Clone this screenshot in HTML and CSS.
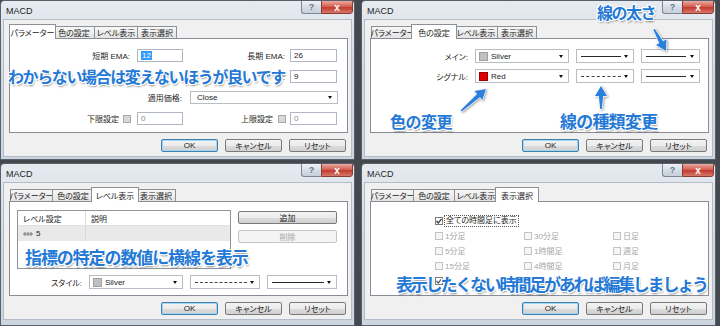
FILE: index.html
```html
<!DOCTYPE html>
<html lang="ja">
<head>
<meta charset="utf-8">
<title>MACD</title>
<link rel="stylesheet" href="styles.css">
</head>
<body>
<div class="screen">

  <section class="win">
    <div class="titlebar"><span class="title">MACD</span><div class="caps"><span class="cap help">?</span><span class="cap close">x</span></div></div>
    <div class="client">
      <div class="tabs">
        <span class="tab t1 active first">パラメーター</span><span class="tab t2">色の設定</span><span class="tab t3">レベル表示</span><span class="tab t4">表示選択</span>
      </div>
      <div class="panel params">
        <div class="prow">
          <span class="lab l127">短期 EMA:</span><span class="field w46"><span class="hl">12</span></span>
          <span class="lab l107">長期 EMA:</span><span class="field w47">26</span>
        </div>
        <div class="prow">
          <span class="lab l280 hidden-lab">ナ:</span><span class="field w47">9</span>
        </div>
        <div class="prow">
          <span class="lab l180">適用価格:</span><span class="select w148"><span class="stext">Close</span><i class="arr"></i></span>
        </div>
        <div class="prow">
          <span class="lab l113">下限設定</span><i class="cb gray"></i><span class="field w46 ml6 dim">0</span>
          <span class="lab l95">上限設定</span><i class="cb gray"></i><span class="field w47 ml4 dim">0</span>
        </div>
      </div>
      <div class="btnrow"><span class="btn default">OK</span><span class="btn">キャンセル</span><span class="btn">リセット</span></div>
    </div>
    <p class="note n1">わからない場合は変えないほうが良いです</p>
  </section>

  <section class="win">
    <div class="titlebar"><span class="title">MACD</span><div class="caps"><span class="cap help">?</span><span class="cap close">x</span></div></div>
    <div class="client">
      <div class="tabs">
        <span class="tab t1">パラメーター</span><span class="tab t2 active">色の設定</span><span class="tab t3">レベル表示</span><span class="tab t4">表示選択</span>
      </div>
      <div class="panel colors">
        <div class="crow">
          <span class="lab l104">メイン:</span>
          <span class="select w94"><i class="sw silver"></i><span class="stext">Silver</span><i class="arr"></i></span>
          <span class="select w58 ml7"><i class="ln solid"></i><i class="arr"></i></span>
          <span class="select w59 ml7"><i class="ln solid"></i><i class="arr"></i></span>
        </div>
        <div class="crow">
          <span class="lab l104">シグナル:</span>
          <span class="select w94"><i class="sw red"></i><span class="stext">Red</span><i class="arr"></i></span>
          <span class="select w58 ml7"><i class="ln dashed"></i><i class="arr"></i></span>
          <span class="select w59 ml7"><i class="ln solid"></i><i class="arr"></i></span>
        </div>
      </div>
      <div class="btnrow"><span class="btn default">OK</span><span class="btn">キャンセル</span><span class="btn">リセット</span></div>
    </div>
    <svg class="arrows" width="355" height="160" viewBox="0 0 355 160">
      <g transform="translate(124 88) rotate(48.7)"><polygon points="0,0 6,10 2.2,10 0.8,33 -0.8,33 -2.2,10 -6,10"/></g>
      <g transform="translate(239 85)"><polygon points="0,0 6,10 2.2,10 0.8,23 -0.8,23 -2.2,10 -6,10"/></g>
      <g transform="translate(304 50) rotate(151.4)"><polygon points="0,0 6,10 2.2,10 0.8,25 -0.8,25 -2.2,10 -6,10"/></g>
    </svg>
    <p class="note n2a">色の変更</p>
    <p class="note n2b">線の種類変更</p>
    <p class="note n2c">線の太さ</p>
  </section>

  <section class="win">
    <div class="titlebar"><span class="title">MACD</span><div class="caps"><span class="cap help">?</span><span class="cap close">x</span></div></div>
    <div class="client">
      <div class="tabs">
        <span class="tab t1">パラメーター</span><span class="tab t2">色の設定</span><span class="tab t3 active">レベル表示</span><span class="tab t4">表示選択</span>
      </div>
      <div class="panel levels">
        <div class="lvtop">
          <div class="list">
            <div class="lhead"><span class="c1">レベル設定</span><span class="c2">説明</span></div>
            <div class="lrow"><span class="c1"><svg class="licon" width="10" height="6" viewBox="0 0 10 6"><path d="M0 3H10M2 1V5M5 1V5M8 1V5" stroke="#777" stroke-width="1" fill="none"/></svg>5</span><span class="c2"></span></div>
          </div>
          <div class="lbtns"><span class="btn wide">追加</span><span class="btn wide off">削除</span></div>
        </div>
        <div class="crow srow">
          <span class="lab l72">スタイル:</span>
          <span class="select w94"><i class="sw silver"></i><span class="stext">Silver</span><i class="arr"></i></span>
          <span class="select w70 ml7"><i class="ln dashed long"></i><i class="arr"></i></span>
          <span class="select w70 ml7"><i class="ln solid long"></i><i class="arr"></i></span>
        </div>
      </div>
      <div class="btnrow"><span class="btn default">OK</span><span class="btn">キャンセル</span><span class="btn">リセット</span></div>
    </div>
    <p class="note n3">指標の特定の数値に横線を表示</p>
  </section>

  <section class="win">
    <div class="titlebar"><span class="title">MACD</span><div class="caps"><span class="cap help">?</span><span class="cap close">x</span></div></div>
    <div class="client">
      <div class="tabs">
        <span class="tab t1">パラメーター</span><span class="tab t2">色の設定</span><span class="tab t3">レベル表示</span><span class="tab t4 active">表示選択</span>
      </div>
      <div class="panel disp">
        <div class="allrow"><i class="cb on"><svg width="6" height="6" viewBox="0 0 6 6"><path d="M0.5 3L2.3 5L5.5 0.8" stroke="#333" stroke-width="1.2" fill="none"/></svg></i><span class="focus">全ての時間足に表示</span></div>
        <div class="tfgrid">
          <span class="opt"><i class="cb off"></i>1分足</span>
          <span class="opt"><i class="cb off"></i>30分足</span>
          <span class="opt"><i class="cb off"></i>日足</span>
          <span class="opt"><i class="cb off"></i>5分足</span>
          <span class="opt"><i class="cb off"></i>1時間足</span>
          <span class="opt"><i class="cb off"></i>週足</span>
          <span class="opt"><i class="cb off"></i>15分足</span>
          <span class="opt"><i class="cb off"></i>4時間足</span>
          <span class="opt"><i class="cb off"></i>月足</span>
          <span class="opt"><i class="cb on"><svg width="6" height="6" viewBox="0 0 6 6"><path d="M0.5 3L2.3 5L5.5 0.8" stroke="#555" stroke-width="1.2" fill="none"/></svg></i></span>
        </div>
      </div>
      <div class="btnrow"><span class="btn default">OK</span><span class="btn">キャンセル</span><span class="btn">リセット</span></div>
    </div>
    <p class="note n4">表示したくない時間足があれば編集しましょう</p>
  </section>

</div>
</body>
</html>
```
FILE: styles.css
```css
* { box-sizing: border-box; }
html, body { margin: 0; padding: 0; }
body {
  width: 720px; height: 326px; overflow: hidden;
  background: #44494f;
  font-family: "Liberation Sans", "Noto Sans CJK JP", sans-serif;
  font-size: 8px; color: #1c1c1c;
  font-feature-settings: "palt";
}
.screen {
  display: grid;
  grid-template-columns: 355px 355px;
  grid-template-rows: 160px 163px;
  column-gap: 6px; row-gap: 3px;
}
.win {
  position: relative;
  display: flex; flex-direction: column;
  border: 1px solid #56616d;
  border-radius: 4px 4px 0 0;
  background: linear-gradient(#e6ebf0, #d3dbe3 40%, #cdd6df);
  padding: 0 3px 3px 3px;
  overflow: hidden;
}
.titlebar { height: 19px; flex: none; display: flex; justify-content: space-between; align-items: flex-start; }
.title { font-family: "Liberation Sans", sans-serif; font-size: 9px; color: #1e1e1e; padding: 5px 0 0 2px; }
.caps { display: flex; margin-top: -1px; margin-right: -2px; }
.cap { height: 14px; display: flex; align-items: center; justify-content: center; font-family: "Liberation Sans", sans-serif; font-weight: bold; }
.help {
  width: 20px; border: 1px solid #7b8794; border-right: none; border-radius: 0 0 0 3px;
  background: linear-gradient(#f0f3f7, #d5dde6 50%, #c6d0db);
  color: #6a7786; font-size: 9px;
}
.close {
  width: 32px; border: 1px solid #8b3b33; border-radius: 0 0 3px 0;
  background: linear-gradient(#e9aaa0, #d2594c 50%, #c23a2d 52%, #d6786b);
  color: #fff; font-size: 10px;
}
.client {
  flex: none; height: 136px;
  background: #f0f0f0;
  box-shadow: 0 0 0 1px #b3bdc8;
  padding: 4px 5px 0 5px;
}
.tabs { display: flex; align-items: flex-end; height: 14px; padding-left: 2px; }
.tab {
  box-sizing: content-box;
  height: 11px; flex: none;
  border: 1px solid #8c9097; border-bottom: none;
  background: linear-gradient(#f7f7f7, #e3e3e3);
  display: flex; align-items: center; justify-content: center;
  white-space: nowrap; color: #1c1c1c;
  margin-left: -1px;
}
.tab.first { margin-left: 0; }
.t1 { width: 41px; }
.t2 { width: 40px; }
.t3 { width: 42px; }
.t4 { width: 38px; }
.tab.active {
  position: relative; z-index: 1;
  height: 14px; padding: 0 2px;
  margin-left: -3px; margin-right: -2px; margin-bottom: -1px;
  background: #fff;
}
.tab.active.first { margin-left: -2px; }
.panel {
  position: relative;
  width: 339px; height: 95px;
  border: 1px solid #898c95;
  background: #fff;
}
.btnrow { display: flex; justify-content: flex-end; gap: 7px; margin-top: 6px; }
.btn {
  width: 57px; height: 13px;
  display: flex; align-items: center; justify-content: center;
  border: 1px solid #7a7a7a; border-radius: 2px;
  background: linear-gradient(#f3f3f3, #ebebeb 50%, #dcdcdc 52%, #d0d0d0);
  white-space: nowrap; color: #1c1c1c;
}
.btn.default { border-color: #3c7fb1; box-shadow: inset 0 0 0 1px #a6d5f2; }
.btn.wide { width: 99px; }
.btn.off { color: #a3a3a3; border-color: #c4c4c4; background: #f4f4f4; }

/* params */
.params { display: flex; flex-direction: column; gap: 8px; padding-top: 10px; }
.prow { display: flex; align-items: center; height: 13px; }
.lab { flex: none; text-align: right; white-space: nowrap; }
.l127 { width: 127px; padding-right: 7px; }
.l107 { width: 107px; padding-right: 5px; }
.l280 { width: 280px; padding-right: 5px; }
.l180 { width: 180px; padding-right: 8px; }
.l113 { width: 113px; padding-right: 4px; }
.l95 { width: 95px; padding-right: 5px; }
.l104 { width: 104px; padding-right: 7px; }
.l72 { width: 72px; padding-right: 7px; }
.field {
  flex: none; height: 13px;
  display: flex; align-items: center;
  border: 1px solid #aeb7c2; background: #fff;
  padding-left: 3px;
}
.field.dim { color: #8a8a8a; }
.hl { background: #3399ff; color: #fff; padding: 0 1px; }
.w46 { width: 46px; }
.w47 { width: 47px; }
.w58 { width: 58px; }
.w59 { width: 59px; }
.w70 { width: 70px; }
.w94 { width: 94px; }
.w148 { width: 148px; }
.ml4 { margin-left: 4px; }
.ml6 { margin-left: 6px; }
.ml7 { margin-left: 7px; }
.cb {
  flex: none; width: 8px; height: 8px;
  border: 1px solid #8e8f8f;
  background: linear-gradient(#dedede, #f4f4f4);
  display: flex; align-items: center; justify-content: center;
}
.cb.gray { background: #d8d8d8; border-color: #a9a9a9; }
.cb.on { background: #fff; border-color: #7d7d7d; }
.cb.off { background: #f6f6f6; border-color: #c3c3c3; }

/* selects */
.select {
  flex: none; height: 14px;
  display: flex; align-items: center;
  border: 1px solid #b9bec5; background: #fff;
  padding: 0 5px 0 3px;
}
.params .select { height: 13px; }
.stext { margin-left: 3px; }
.sw { flex: none; width: 9px; height: 9px; border: 1px solid #8a8a8a; }
.sw.silver { background: #c0c0c0; border-color: #a0a0a0; }
.sw.red { background: #e00000; border-color: #900; }
.arr {
  flex: none; width: 0; height: 0; margin-left: auto;
  border-left: 2.5px solid transparent; border-right: 2.5px solid transparent;
  border-top: 3px solid #111;
}
.ln { flex: none; width: 40px; height: 0; margin-left: 1px; border-top: 1px solid #2a2a2a; }
.ln.dashed { border-top-style: dashed; border-top-color: #444; }
.ln.long { width: 52px; }

/* colors panel */
.colors { display: flex; flex-direction: column; gap: 6px; padding-top: 10px; }
.crow { display: flex; align-items: center; height: 14px; }

/* levels panel */
.levels { padding: 8px 0 0 7px; }
.lvtop { display: flex; gap: 7px; }
.list { width: 214px; height: 59px; border: 1px solid #8f959c; background: #fff; }
.lhead, .lrow { display: flex; height: 15px; }
.lhead { border-bottom: 1px solid #e2e2e2; }
.lrow { background: #e9e9e9; }
.c1 {
  width: 68px; padding-left: 5px; border-right: 1px solid #dadada;
  display: flex; align-items: center; gap: 3px;
}
.c2 { display: flex; align-items: center; padding-left: 5px; }
.licon { flex: none; }
.lbtns { display: flex; flex-direction: column; gap: 6px; padding-top: 1px; }
.srow { margin-top: 6px; }

/* display panel */
.disp { padding: 12px 0 0 64px; }
.allrow { display: flex; align-items: center; height: 13px; }
.focus { margin-left: 2px; padding: 0 1px; line-height: 10px; outline: 1px dotted #555; }
.tfgrid { display: grid; grid-template-columns: 89px 89px 80px; grid-auto-rows: 15px; align-items: center; margin-top: 1px; }
.opt { display: flex; align-items: center; color: #a6a6a6; white-space: nowrap; }
.opt .cb { margin-right: 2px; }

/* overlays */
.arrows { position: absolute; left: 0; top: 0; pointer-events: none; filter: drop-shadow(1px 1px 1px rgba(0,0,0,0.35)); }
.arrows polygon { fill: #2a80dc; stroke: #fff; stroke-width: 1.3; stroke-linejoin: round; paint-order: stroke; }
.note {
  position: absolute; margin: 0;
  font-family: "Noto Sans CJK JP", sans-serif; font-weight: 700;
  font-feature-settings: normal;
  color: #2479d6; line-height: 1; white-space: nowrap;
  text-shadow: 1px 0 0 #fff, -1px 0 0 #fff, 0 1px 0 #fff, 0 -1px 0 #fff,
    1px 1px 0 #fff, -1px -1px 0 #fff, 1px -1px 0 #fff, -1px 1px 0 #fff,
    1px 2px 2px rgba(0,0,0,0.45);
}
.n1 { left: 7px; top: 67px; font-size: 16px; letter-spacing: -1.4px; }
.n2a { left: 28px; top: 112px; font-size: 16px; letter-spacing: -0.5px; }
.n2b { left: 198px; top: 111px; font-size: 17px; letter-spacing: -0.8px; }
.n2c { left: 235px; top: 3px; font-size: 16px; letter-spacing: -1.5px; }
.n3 { left: 24px; top: 84px; font-size: 17px; letter-spacing: -1.1px; }
.n4 { left: 34px; top: 111px; font-size: 17px; letter-spacing: -2.2px; }
```
